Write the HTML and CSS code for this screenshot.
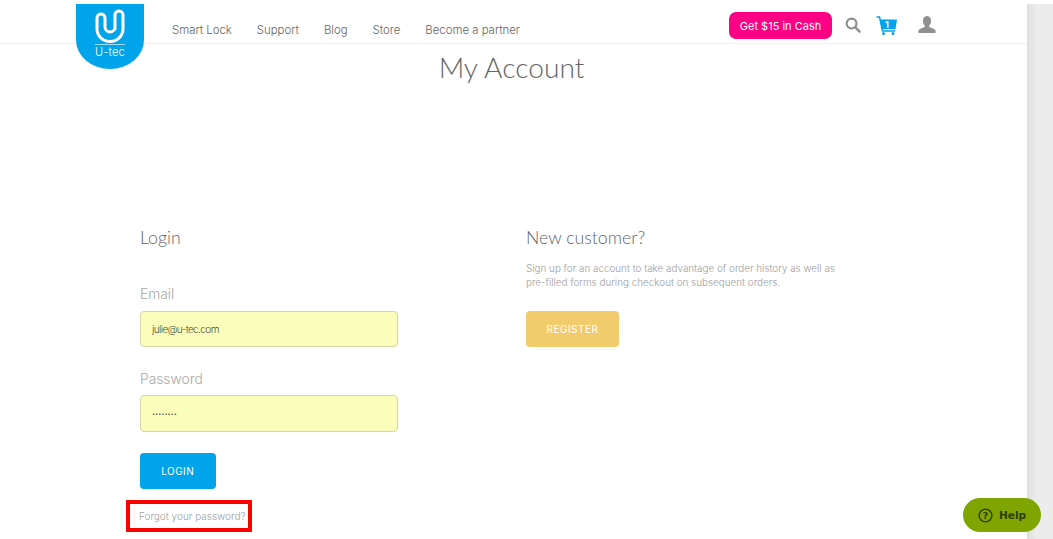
FILE: index.html
```html
<!DOCTYPE html>
<html lang="en">
<head>
<meta charset="utf-8">
<title>My Account</title>
<link rel="stylesheet" href="styles.css">
</head>
<body>
<div class="page">
  <div class="content">
    <header class="header">
      <a class="logo" href="#">
        <svg class="logo-mark" viewBox="0 0 32 34" width="32" height="34">
          <path d="M21 20V6A4 4 0 0 1 29 6V20A13 12.500 0 0 1 3 20V9A4 4 0 0 1 11 9V18A5 5 0 0 0 21 18" fill="none" stroke="#fff" stroke-width="3" stroke-linecap="round"/>
        </svg>
        <span class="logo-rule"></span>
        <span class="logo-text">U-tec</span>
      </a>
      <nav class="nav">
        <a href="#">Smart Lock</a>
        <a href="#">Support</a>
        <a href="#">Blog</a>
        <a href="#">Store</a>
        <a href="#">Become a partner</a>
      </nav>
      <div class="actions">
        <a class="cash" href="#">Get $15 in Cash</a>
        <svg class="icon-search" viewBox="0 0 17 17" width="16" height="16">
          <circle cx="7" cy="7" r="5.200" fill="none" stroke="#8f8f8f" stroke-width="2.300"/>
          <path d="M11 11L15.500 15.500" stroke="#8f8f8f" stroke-width="2.600" stroke-linecap="round"/>
        </svg>
        <span class="cart">
          <svg viewBox="0 0 22 19" width="22" height="19">
            <path d="M0.500 1H3.500L6.500 15H19" fill="none" stroke="#00a4eb" stroke-width="1.500"/>
            <path d="M4 3.500H21L19.500 13H6Z" fill="#00a4eb"/>
            <circle cx="7.500" cy="17.500" r="1.500" fill="#00a4eb"/>
            <circle cx="17" cy="17.500" r="1.500" fill="#00a4eb"/>
          </svg>
          <span class="cart-count">1</span>
        </span>
        <svg class="icon-user" viewBox="0 0 20 17" width="18" height="17" preserveAspectRatio="none">
          <path d="M10 0C7 0 5.500 2.200 5.500 5C5.500 7 6.300 8.700 7.500 9.700V11C5 12 1.500 12.500 0.500 14.500V17H19.500V14.500C18.500 12.500 15 12 12.500 11V9.700C13.700 8.700 14.500 7 14.500 5C14.500 2.200 13 0 10 0Z" fill="#8f8f8f"/>
        </svg>
      </div>
    </header>
    <h1 class="title">My Account</h1>
    <main class="columns">
      <section class="login">
        <h2 class="heading">Login</h2>
        <form class="form">
          <label class="label" for="email">Email</label>
          <input class="field field-email" id="email" type="text" value="julie@u-tec.com">
          <label class="label label-second" for="password">Password</label>
          <input class="field field-password" id="password" type="password" value="password">
          <button class="btn btn-login" type="button">LOGIN</button>
        </form>
        <a class="forgot" href="#">Forgot your password?</a>
      </section>
      <section class="register">
        <h2 class="heading">New customer?</h2>
        <p class="blurb">Sign up for an account to take advantage of order history as well as pre-filled forms during checkout on subsequent orders.</p>
        <button class="btn btn-register" type="button">REGISTER</button>
      </section>
    </main>
  </div>
  <div class="scrollbar"></div>
</div>
<button class="help" type="button">
  <svg viewBox="0 0 16 16" width="15" height="15">
    <circle cx="8" cy="8" r="6.800" fill="none" stroke="#2f3d00" stroke-width="1.500"/>
    <text x="8" y="11.500" text-anchor="middle" class="help-q">?</text>
  </svg>
  Help
</button>
</body>
</html>
```
FILE: styles.css
```css
* { box-sizing: border-box; }
html, body { margin: 0; height: 539px; overflow: hidden; background: #fff; }
body { font-family: "Inter", "Liberation Sans", sans-serif; color: #777; }
a { text-decoration: none; color: inherit; }

.page { display: flex; height: 539px; }
.content { width: 1027px; flex: none; }
.scrollbar { flex: 1; margin-top: 4px; background: linear-gradient(90deg, #dedede, #ececec 35%, #ececec); }

.header {
  position: relative;
  display: flex;
  align-items: center;
  height: 44px;
  padding: 4px 91px 0 172px;
  border-bottom: 1px solid #f0f0f0;
}
.logo {
  position: absolute;
  left: 76px;
  top: 4px;
  width: 68px;
  height: 65px;
  background: #00a4eb;
  border-radius: 0 0 34px 34px / 0 0 29px 29px;
  display: flex;
  flex-direction: column;
  align-items: center;
  color: #fff;
  z-index: 1;
}
.logo-mark { margin-top: 5px; }
.logo-rule { width: 30px; height: 1px; background: #9fdcf7; margin-top: 1px; }
.logo-text { font-size: 11px; font-weight: 300; line-height: 13px; margin-top: 1px; letter-spacing: 0.200px; }

.nav { display: flex; gap: 25px; font-size: 11.400px; font-weight: 300; color: #666; margin-top: 13px; }
.actions { margin-left: auto; display: flex; align-items: center; margin-top: 4px; }
.cash {
  width: 103px;
  height: 27px;
  background: #ff0084;
  color: #fff;
  border-radius: 7px;
  font-size: 11px;
  display: flex;
  align-items: center;
  justify-content: center;
}
.icon-search { margin: -2px 0 0 13px; }
.cart { position: relative; width: 22px; height: 19px; margin-left: 15px; }
.cart svg { display: block; }
.cart-count {
  position: absolute;
  left: 9px;
  top: 3.500px;
  font-size: 9px;
  line-height: 10px;
  font-weight: 700;
  color: #fff;
}
.icon-user { margin: -2px 0 0 20px; }

.title {
  margin: 7px 0 0;
  padding-right: 4px;
  font: 300 28.200px/32px "Lato", sans-serif;
  color: #666;
  text-align: center;
}
.columns { display: flex; padding: 146px 0 0 140px; }
.login { width: 386px; }
.register { flex: 1; }
.heading { margin: 0 0 1px; font: 300 17.700px/18px "Lato", sans-serif; color: #60666e; }

.form { display: flex; flex-direction: column; align-items: flex-start; }
.label { margin-top: 37px; font-size: 13.800px; line-height: 18px; font-weight: 300; color: #a8a8a8; }
.label-second { margin-top: 22.500px; }
.field {
  width: 258px;
  height: 36px;
  margin-top: 8px;
  padding: 0 11px;
  background: #fafeba;
  border: 1px solid #d3d6a8;
  border-radius: 4px;
  font: 300 10px "Inter", "Liberation Sans", sans-serif;
  color: #4c4c3a;
}
.field-email { letter-spacing: -0.600px; }
.field-password { height: 37px; margin-top: 7.500px; font-size: 5.500px; }
.btn {
  border: 0;
  border-radius: 4px;
  color: #fff;
  font: 400 10px "Inter", "Liberation Sans", sans-serif;
  letter-spacing: 0.500px;
}
.btn-login { width: 75.500px; height: 36px; margin-top: 21px; background: #00a4eb; }
.forgot {
  display: inline-block;
  margin: 11px 0 0 -14px;
  width: 126px;
  height: 32px;
  border: 4px solid #f00;
  padding-left: 9px;
  font-size: 10px;
  line-height: 24px;
  font-weight: 300;
  color: #a0a0a0;
  white-space: nowrap;
}
.blurb { margin: 14px 0 0; width: 320px; font-size: 9.900px; line-height: 14px; font-weight: 300; color: #a0a0a0; }
.btn-register { width: 93px; height: 36px; margin-top: 22px; background: #f2cb6c; }

.help {
  position: fixed;
  left: 963px;
  top: 498px;
  width: 78px;
  height: 34px;
  border: 0;
  border-radius: 17px;
  background: #7fa600;
  color: #2f3d00;
  font: 700 10.500px "DejaVu Sans", sans-serif;
  display: flex;
  align-items: center;
  justify-content: center;
  gap: 6px;
}
.help-q { font: 700 10px "DejaVu Sans", sans-serif; fill: #2f3d00; }
```
